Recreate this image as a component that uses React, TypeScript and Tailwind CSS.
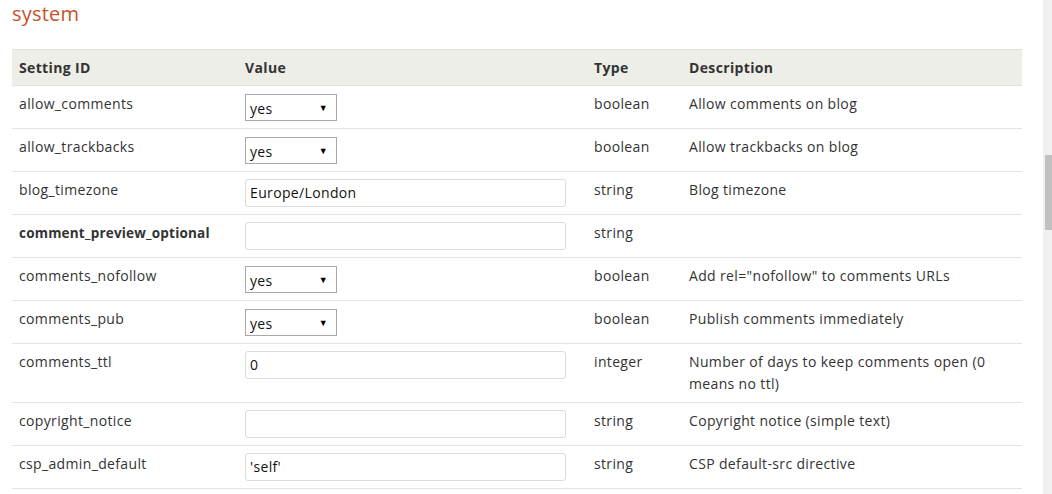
import React from 'react';

type Row = {
  id: string;
  kind: 'select' | 'text';
  value: string;
  type: string;
  desc: string;
  bold?: boolean;
};

const rows: Row[] = [
  { id: 'allow_comments', kind: 'select', value: 'yes', type: 'boolean', desc: 'Allow comments on blog' },
  { id: 'allow_trackbacks', kind: 'select', value: 'yes', type: 'boolean', desc: 'Allow trackbacks on blog' },
  { id: 'blog_timezone', kind: 'text', value: 'Europe/London', type: 'string', desc: 'Blog timezone' },
  { id: 'comment_preview_optional', kind: 'text', value: '', type: 'string', desc: '', bold: true },
  { id: 'comments_nofollow', kind: 'select', value: 'yes', type: 'boolean', desc: 'Add rel="nofollow" to comments URLs' },
  { id: 'comments_pub', kind: 'select', value: 'yes', type: 'boolean', desc: 'Publish comments immediately' },
  { id: 'comments_ttl', kind: 'text', value: '0', type: 'integer', desc: 'Number of days to keep comments open (0 means no ttl)' },
  { id: 'copyright_notice', kind: 'text', value: '', type: 'string', desc: 'Copyright notice (simple text)' },
  { id: 'csp_admin_default', kind: 'text', value: "'self'", type: 'string', desc: 'CSP default-src directive' },
];

const FakeSelect = ({ value }: { value: string }) => (
  <div className="mt-px flex h-[27px] w-[92px] items-center justify-between border border-[#a9a9a9] bg-white pl-[4px] pr-[8px] text-[#111]">
    <span className="pt-[2px]">{value}</span>
    <span className="text-[9px] leading-none text-black">▼</span>
  </div>
);

const TextBox = ({ value }: { value: string }) => (
  <div className="flex h-[28px] w-[321px] items-center rounded-[3px] border border-[#dcdcdc] bg-white px-[4px] text-[#111]">
    {value}
  </div>
);

export default function App() {
  return (
    <div
      className="flex h-[494px] w-[1052px] overflow-hidden bg-white text-[14px] tracking-[0.35px] text-[#333]"
      style={{ fontFamily: '"Open Sans", "Noto Sans", sans-serif' }}
    >
      <div className="flex-1 pl-[12px]">
        <h2 className="text-[20px] leading-[28px] tracking-[0.2px] text-[#c4532b]">system</h2>
        <table className="mt-[21px] w-[1010px] table-fixed border-collapse">
          <colgroup>
            <col className="w-[226px]" />
            <col className="w-[349px]" />
            <col className="w-[95px]" />
            <col className="w-[340px]" />
          </colgroup>
          <thead>
            <tr className="border-t border-b border-[#e2e2dc] bg-[#eeeee9] text-left font-bold leading-[22px]">
              <th className="px-[7px] pt-[7px] pb-[6px]">Setting ID</th>
              <th className="px-[7px] pt-[7px] pb-[6px]">Value</th>
              <th className="px-[7px] pt-[7px] pb-[6px]">Type</th>
              <th className="px-[7px] pt-[7px] pb-[6px]">Description</th>
            </tr>
          </thead>
          <tbody>
            {rows.map((row) => (
              <tr key={row.id} className="border-b border-[#e3e3e3] align-top leading-[22px]">
                <td className={`px-[7px] py-[7px] ${row.bold ? 'text-[13.5px] font-bold tracking-[0.2px]' : ''}`}>{row.id}</td>
                <td className="px-[7px] py-[7px]">
                  {row.kind === 'select' ? <FakeSelect value={row.value} /> : <TextBox value={row.value} />}
                </td>
                <td className="px-[7px] py-[7px]">{row.type}</td>
                <td className="px-[7px] py-[7px]">{row.desc}</td>
              </tr>
            ))}
          </tbody>
        </table>
      </div>
      <div className="flex w-[9px] flex-col bg-[#f0f0f0] pl-[2px]">
        <div className="h-[155px]" />
        <div className="h-[75px] bg-[#c1c1c1]" />
      </div>
    </div>
  );
}
